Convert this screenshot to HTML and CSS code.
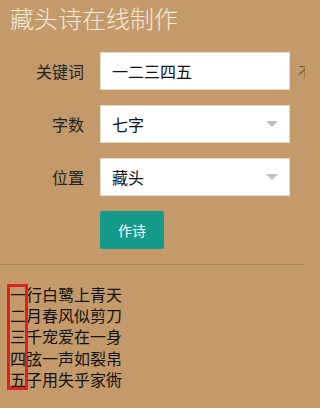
FILE: index.html
```html
<!DOCTYPE html>
<html lang="zh-CN">
<head>
<meta charset="utf-8">
<title>藏头诗在线制作</title>
<link rel="stylesheet" href="styles.css">
</head>
<body>
<h1 class="title">藏头诗在线制作</h1>
<form class="form">
  <div class="row">
    <label class="label">关键词</label>
    <div class="field"><span class="value">一二三四五</span></div>
    <span class="hint">不超过7个字</span>
  </div>
  <div class="row">
    <label class="label">字数</label>
    <div class="field select"><span class="value">七字</span><span class="arrow"></span></div>
  </div>
  <div class="row">
    <label class="label">位置</label>
    <div class="field select"><span class="value">藏头</span><span class="arrow"></span></div>
  </div>
  <div class="row">
    <span class="label"></span>
    <button type="button" class="btn">作诗</button>
  </div>
</form>
<hr class="divider">
<div class="poem">
  <div class="line">一行白鹭上青天</div>
  <div class="line">二月春风似剪刀</div>
  <div class="line">三千宠爱在一身</div>
  <div class="line">四弦一声如裂帛</div>
  <div class="line">五子用失乎家衖</div>
  <div class="mark"></div>
</div>
</body>
</html>
```

FILE: styles.css
```css
html, body {
  margin: 0;
  padding: 0;
  overflow: hidden;
}
body {
  background: #c49a6b;
  font-family: "Noto Sans CJK SC", "Noto Sans", sans-serif;
  color: #1a1a1a;
  width: 305px;
  height: 408px;
}
.title {
  margin: 0;
  padding: 0 0 0 10px;
  font-size: 24px;
  font-weight: 300;
  line-height: 36px;
  color: #f4ecdc;
}
.form {
  display: flex;
  flex-direction: column;
  gap: 15px;
  margin-top: 16px;
}
.row {
  display: flex;
  align-items: center;
  white-space: nowrap;
}
.label {
  flex: 0 0 84px;
  text-align: right;
  font-size: 16px;
  color: #222;
  margin-right: 16px;
}
.field {
  flex: 0 0 auto;
  box-sizing: border-box;
  width: 190px;
  height: 38px;
  background: #fff;
  border: 1px solid #e6dccd;
  display: flex;
  align-items: center;
  justify-content: space-between;
  padding: 0 11px;
  font-size: 16px;
  color: #111;
}
.arrow {
  width: 0;
  height: 0;
  border-left: 6px solid transparent;
  border-right: 6px solid transparent;
  border-top: 6px solid #bdbdbd;
  margin-right: 0;
}
.hint {
  flex: 0 0 auto;
  margin-left: 8px;
  font-size: 14px;
  color: #6b5a45;
}
.btn {
  flex: 0 0 auto;
  width: 64px;
  height: 38px;
  border: 0;
  border-radius: 2px;
  background: #149a89;
  color: #fff;
  font-family: inherit;
  font-size: 14px;
  padding: 0;
}
.divider {
  margin: 15px 0 0;
  border: 0;
  border-top: 1px solid #a8845d;
  height: 0;
}
.poem {
  position: relative;
  margin-top: 19px;
  padding-left: 10px;
  font-size: 16px;
  line-height: 21.2px;
  color: #111;
}
.mark {
  position: absolute;
  left: 7px;
  top: 0;
  width: 15px;
  height: 100px;
  border: 3px solid #e0201a;
}
```
